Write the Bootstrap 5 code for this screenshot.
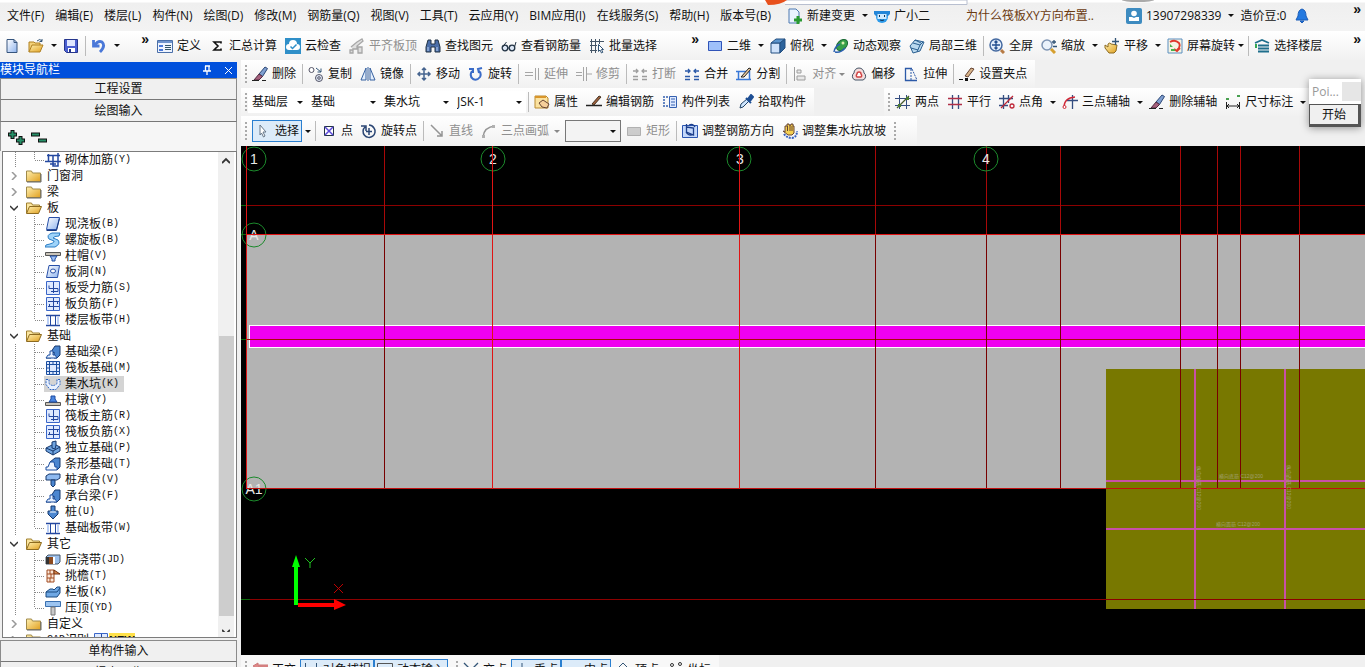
<!DOCTYPE html>
<html lang="zh-CN">
<head>
<meta charset="utf-8">
<meta name="viewport" content="width=device-width, initial-scale=1">
<title>钢筋算量</title>
<link href="https://cdn.jsdelivr.net/npm/bootstrap@5.3.0/dist/css/bootstrap.min.css" rel="stylesheet">
<style>
  body { font: 12px/16px "Open Sans", "Noto Sans CJK SC", sans-serif; color: #111; background: #f0f0f0; overflow: hidden; }
  button, select { font: inherit; color: inherit; }
  button { border: 0; background: none; padding: 0; }
  a { color: inherit; text-decoration: none; }
  svg { flex: none; }
  .ico { width: 16px; height: 16px; display: block; }
  .app { height: calc(100vh + 17px); }
  .fill { min-width: 0; min-height: 0; }
  .menubar { height: 31px; background: linear-gradient(#fff 0 2px, #efefef 3px, #f3f3f3); }
  .menus { flex: 0 0 783px; padding-left: 7px; gap: 11px; }
  .account { margin-left: 28px; }
  .bar { height: 28px; }
  .bar.main-bar { height: 29px; }
  .bar.draw-bar { height: 30px; }
  .strip { height: 100%; display: flex; align-items: center; background: linear-gradient(#fff, #f1f1f1); flex: none; white-space: nowrap; padding-right: 4px; }
  .files { flex: 0 0 153px; }
  .model { flex: 0 0 550px; }
  .axes { margin-left: 70px; }
  .tb { display: flex; align-items: center; gap: 4px; padding: 0 4px; height: 22px; white-space: nowrap; flex: none; }
  .tb:disabled { color: #8f8f8f; }
  .tb:disabled .ico { filter: grayscale(1); opacity: .55; }
  .tb.active { background: #dcebf9; border: 1px solid #2a7fd0; padding: 0 2px; }
  .arrow { width: 11px; height: 22px; display: flex; align-items: center; justify-content: center; flex: none; }
  .arrow::before { content: ""; border: 3px solid transparent; border-top-color: #111; border-bottom: 0; }
  .arrow.narrow { width: 8px; }
  .arrow:disabled::before { border-top-color: #888; }
  .split { width: 4px; height: 20px; flex: none; background: linear-gradient(#bbb, #bbb) 2px 0/1px 100% no-repeat; }
  .grip { width: 7px; height: 18px; flex: none; background: repeating-linear-gradient(#aaa 0 2px, transparent 2px 4px) 4px 0/2px 100% no-repeat; }
  .more { font: bold 14px/14px "Liberation Sans", sans-serif; margin-bottom: 14px; }
  .pick { appearance: none; border: 0; border-radius: 0; height: 22px; width: 73px; padding: 0 14px 0 4px; flex: none;
    background: #fff url("data:image/svg+xml,%3Csvg xmlns='http://www.w3.org/2000/svg' width='6' height='3'%3E%3Cpath d='M0 0h6L3 3z' fill='%23111'/%3E%3C/svg%3E") right 4px center no-repeat; }
  .pick.floor { width: 59px; }
  .pick.plain { width: 56px; border: 1px solid #777; background-color: #f3f3f3; margin: 0 1px 0 4px; }
  .news { color: #6b3a10; margin-left: 32px; }

  .side { width: 241px; padding: 2px 4px 0 0; flex: none; background: #f0f0f0; }
  .side-title { height: 16px; background: #0050dc; color: #fff; padding-right: 4px; }
  .side-btn { height: 22px; border: 1px solid #8b8b8b; border-bottom-color: #777; background: #f0f0f0; width: 100%; flex: none; }
  .side-btn + .side-btn { border-top: 0; }
  .tree-box + .side-btn { margin-top: 2px; }
  .side-tools { height: 29px; padding-left: 7px; gap: 6px; border-left: 1px solid #999; border-right: 1px solid #999; background: #f6f6f6; }
  .tree-box { margin-left: 2px; border: 1px solid #7c7c7c; background: #fff; }
  .tree, .tree ul { list-style: none; margin: 0; padding: 0; }
  .tree .key { font: 10px/16px "Liberation Mono", monospace; }
  .node { display: flex; align-items: center; height: 16px; white-space: nowrap; }
  .node .twist { width: 8px; height: 8px; margin: 0 8px 0 7px; }
  .node .ico { margin-right: 5px; }
  .branch { background: repeating-linear-gradient(#888 0 1px, transparent 1px 2px) 12px 0/1px 100% no-repeat,
    repeating-linear-gradient(#888 0 1px, transparent 1px 2px) 31px 0/1px calc(100% - 8px) no-repeat; }
  .branch .node::before { content: ""; width: 10px; height: 1px; margin-left: 32px; background: repeating-linear-gradient(90deg, #888 0 1px, transparent 1px 2px); }
  .branch .ico { margin-right: 4px; }
  .node.chosen { background: linear-gradient(#d4d4d4, #d4d4d4) 41px 0/80px 100% no-repeat; }
  .new-tag { background: #ffe14a; font: bold 11px/14px "Liberation Sans", sans-serif; }
  .scroll { width: 16px; background: #f0f0f0; margin-right: 2px; padding: 5px 0; }
  .scroll .room { flex: 168 0 0; }
  .scroll .thumb { flex: 276 0 0; background: #cdcdcd; width: 15px; }

  .view { background: #000; }
  .view text { font-family: "Liberation Sans", sans-serif; }
  .status { height: 29px; background: #f0f0f0; }
  .status .strip { background: #f8f8f8; }

  .float-win { position: absolute; right: 4px; top: 79px; width: 52px; background: #fff; box-shadow: 0 1px 8px #0006; }
  .float-title { height: 25px; color: #999; padding-left: 3px; }
  .float-title span + span { width: 19px; height: 19px; background: #e6e6e6; }
  .float-win button { height: 23px; width: 100%; background: #f0f0f0; border: 1px solid #555; border-width: 1px 3px 3px 1px; }
  .top-tab { position: absolute; left: 765px; top: 0; }
</style>
</head>
<body>
<svg width="0" height="0" class="position-absolute" aria-hidden="true">
  <defs>
    <linearGradient id="gold" x2="1" y2="1"><stop offset="0" stop-color="#fff0b0"/><stop offset="1" stop-color="#e0a020"/></linearGradient>
    <linearGradient id="sky" x2="1" y2="1"><stop offset="0" stop-color="#fff"/><stop offset="1" stop-color="#8fb4ee"/></linearGradient>
  </defs>
  <symbol id="i-new" viewBox="0 0 16 16"><path d="M3 1.500h7l3 3v10H3z" fill="url(#sky)" stroke="#36557e"/><path d="M10 1.500v3h3" fill="none" stroke="#36557e"/></symbol>
  <symbol id="i-open" viewBox="0 0 16 16"><path d="M1 14V4h5l1 1h5v2" fill="#f3d27a" stroke="#b08020"/><path d="M1 14l3-7h11l-3 7z" fill="url(#gold)" stroke="#b08020"/><path d="M9 3q3-3 5 0m0-2v2.500h-2.500" fill="none" stroke="#357"/></symbol>
  <symbol id="i-save" viewBox="0 0 16 16"><path d="M1.500 1.500h13v13h-11l-2-2z" fill="#4a5fd0" stroke="#25358c"/><path d="M4 2h8v6H4z" fill="#dfe6ff"/><path d="M5 10h7v4H5z" fill="#fff"/><path d="M6 11h2v3H6z" fill="#25358c"/></symbol>
  <symbol id="i-undo" viewBox="0 0 16 16"><path d="M2.500 2v6h6M3 8q4-6 8-4 4 4-2 10" fill="none" stroke="#4a78d8" stroke-width="2.800"/></symbol>
  <symbol id="i-define" viewBox="0 0 16 16"><path d="M.5 2.500h15v12H.5z" fill="#eef4ff" stroke="#4a6fa8"/><path d="M1 3h14v2H1z" fill="#6f93cc"/><path d="M2 7h4v2H2zM2 11h4v2H2z" fill="#4a78d8"/><path d="M8 7.500h6M8 9.500h6M8 11.500h6" stroke="#356"/></symbol>
  <symbol id="i-sum" viewBox="0 0 16 16"><path d="M12 5.500V4H5l4 4-4 4h7v-1.500" fill="none" stroke="#111" stroke-width="1.600"/></symbol>
  <symbol id="i-cloud" viewBox="0 0 16 16"><path d="M0 0h16v16H0z" fill="#2f8fc8"/><path d="M4 12a3 3 0 0 1 0-6 4 4 0 0 1 8 0 3 3 0 0 1 0 6z" fill="#fff"/><path d="M5.500 8.500l2 2 4-4" fill="none" stroke="#2f8fc8" stroke-width="1.500"/></symbol>
  <symbol id="i-flat" viewBox="0 0 16 16"><path d="M2 9l6-5 5-3 1 2-6 5v3H4v4H1v-3h3M9 15V9h4v6z" fill="#ccc" stroke="#666" stroke-width="1.300"/></symbol>
  <symbol id="i-find" viewBox="0 0 16 16"><path d="M3 2h3v4h4V2h3l2 7v5h-5V9H6v5H1V9z" fill="#4b6ea8" stroke="#234"/><path d="M3 9v4M12 9v4" stroke="#b9d0f4"/></symbol>
  <symbol id="i-glass" viewBox="0 0 16 16"><circle cx="4" cy="10" r="2.800" fill="#dce6f4" stroke="#234" stroke-width="1.300"/><circle cx="11" cy="10" r="2.800" fill="#dce6f4" stroke="#234" stroke-width="1.300"/><path d="M1.500 9l4-5M13.500 9l1.500-5M7 10h1" stroke="#234" fill="none"/></symbol>
  <symbol id="i-batch" viewBox="0 0 16 16"><path d="M2.500 1v14M6.500 1v14M10.500 1v5M1 3.500h14M1 7.500h7M1 12.500h7" stroke="#456" fill="none"/><path d="M9.500 6.500v7l1.500-1.500 1.500 3 1.300-.7-1.300-2.800h2z" fill="#fff" stroke="#357"/></symbol>
  <symbol id="i-plane" viewBox="0 0 16 16"><path d="M1.500 3.500h13v9h-13z" fill="#9fc0fa" stroke="#3054b8"/></symbol>
  <symbol id="i-cube" viewBox="0 0 16 16"><path d="M1 5h9v10H1z" fill="#cfe2fa" stroke="#234f80"/><path d="M1 5l5-4h9l-5 4z" fill="#5b94cc" stroke="#234f80"/><path d="M10 5l5-4v9l-5 5z" fill="#2c639c" stroke="#234f80"/></symbol>
  <symbol id="i-orbit" viewBox="0 0 16 16"><ellipse cx="9" cy="7" rx="6.500" ry="4.500" transform="rotate(-45 9 7)" fill="#38a048" stroke="#1c6a36"/><circle cx="10" cy="5" r="1.500" fill="#d9f0b0"/><path d="M1 14q1-6 6-8M2 14q6 1 10-4" fill="none" stroke="#2a60b0" stroke-width="1.500"/></symbol>
  <symbol id="i-local" viewBox="0 0 16 16"><path d="M1 8l5-6 9 2-4 9-7 2z" fill="#b9d8ee" stroke="#2b5f90"/><path d="M4 5l7 2-3 7M11 7l3-3M6 2l6 3M2 10l7 2" fill="none" stroke="#2b5f90"/></symbol>
  <symbol id="i-full" viewBox="0 0 16 16"><circle cx="7" cy="7" r="6" fill="#e3eefc" stroke="#4469a0" stroke-width="1.500"/><path d="M7 3v8M3 7h8M5.500 4.500L7 3l1.500 1.500M5.500 9.500L7 11l1.500-1.500" stroke="#234f90" stroke-width="1.300" fill="none"/><path d="M12 12l3 3" stroke="#b67a44" stroke-width="3"/></symbol>
  <symbol id="i-zoom" viewBox="0 0 16 16"><circle cx="6" cy="7" r="5" fill="#eaf2fb" stroke="#7d94b3" stroke-width="1.500"/><path d="M10 11l4 4" stroke="#d6a030" stroke-width="3"/><path d="M11 4h4M13 2v4M12 8.500h4" stroke="#357" stroke-width="1.300"/></symbol>
  <symbol id="i-pan" viewBox="0 0 16 16"><path d="M1 7l3 2V6q2-2 3 0l6 1-1 6-2 2H5L1 10z" fill="url(#gold)" stroke="#8c6a20"/><path d="M11.500 0v7M8 3.500h7" stroke="#357" stroke-width="1.300"/></symbol>
  <symbol id="i-rot-screen" viewBox="0 0 16 16"><path d="M1 1h14v14H1z" fill="#f5f3e4" stroke="#5a8fc0"/><path d="M3 4q5-3 9 1 2 4-2 7M13 10l-3 3-3-2" fill="none" stroke="#e0382c" stroke-width="1.800"/><path d="M3 6l3 3H3zM4 11h4v2H4z" fill="#4bb04b"/></symbol>
  <symbol id="i-floors" viewBox="0 0 16 16"><path d="M1 5l7-3 7 3M4 7.500h11M4 10.500h11M4 13.500h11" fill="none" stroke="#1f6f8c" stroke-width="1.800"/><path d="M1 6h2v4H1z" fill="#35a853"/></symbol>
  <symbol id="i-newdoc" viewBox="0 0 16 16"><path d="M2 1h7l3 3v11H2z" fill="#eaf3ff" stroke="#4c79b0"/><path d="M11 8v8M7 12h8" stroke="#2a9a32" stroke-width="3"/></symbol>
  <symbol id="i-robot" viewBox="0 0 16 16"><circle cx="8" cy="9" r="6" fill="#2d9bea"/><path d="M0 6V3h16v3l-2 2H2z" fill="#2386d8"/><path d="M3.500 6h9v5h-9z" fill="#cfeaff"/><path d="M5.500 7v2M10.500 7v2M6 12q2 1 4 0" stroke="#135" fill="none"/></symbol>
  <symbol id="i-user" viewBox="0 0 16 16"><rect width="16" height="16" rx="2" fill="#3d8bc0"/><circle cx="8" cy="5.500" r="2.800" fill="#fff"/><path d="M3 13V9h3l2 1 2-1h3v4z" fill="#fff"/></symbol>
  <symbol id="i-bell" viewBox="0 0 16 16"><path d="M8 1q4 1 4 7l2 4H2l2-4q0-6 4-7zM6 13h4l-2 2z" fill="#2379e0" stroke="#1a5cb8"/></symbol>
  <symbol id="i-erase" viewBox="0 0 16 16"><path d="M7 8l6-7 2.500 1.500-5 8z" fill="#7f9fd0" stroke="#2b4674"/><path d="M7 8l3.500 2.500L7 14H2z" fill="#a5607c" stroke="#502a40"/><path d="M0 14.500h7M10 14.500h4" stroke="#222"/></symbol>
  <symbol id="i-copy" viewBox="0 0 16 16"><circle cx="3.500" cy="4" r="2.500" fill="#fff" stroke="#556"/><circle cx="11" cy="12" r="3.500" fill="#dfe8f6" stroke="#556"/><circle cx="11" cy="12" r="1.300" fill="none" stroke="#556"/><path d="M8 2l5 4M13 2.500V6H9.500" fill="none" stroke="#357"/></symbol>
  <symbol id="i-mirror" viewBox="0 0 16 16"><path d="M6 2v12H1zM10 2v12h5z" fill="#e3eefc" stroke="#3560a0"/><path d="M8 1v14" stroke="#3560a0"/></symbol>
  <symbol id="i-move" viewBox="0 0 16 16"><path d="M8 2v12M2 8h12M6 4l2-2 2 2M6 12l2 2 2-2M4 6L2 8l2 2M12 6l2 2-2 2" fill="none" stroke="#46648f" stroke-width="1.500"/></symbol>
  <symbol id="i-turn" viewBox="0 0 16 16"><path d="M4 5q-3 5 1 8 4 2 7-2 2-4-2-7M14 2l-4 1 1 4M1 3h4v4" fill="none" stroke="#3b6cc8" stroke-width="2"/></symbol>
  <symbol id="i-extend" viewBox="0 0 16 16"><path d="M1 6.500h8M1 9.500h8M11.500 2v12M14.500 2v12" fill="none" stroke="#567"/></symbol>
  <symbol id="i-trim" viewBox="0 0 16 16"><path d="M0 6.500h6M0 9.500h6M10 8h6M7.500 1v14M10.500 1v14" fill="none" stroke="#567"/></symbol>
  <symbol id="i-break" viewBox="0 0 16 16"><path d="M1 10.500h5M1 13.500h5M10 10.500h5M10 13.500h5M1 5h5M4 3l2 2-2 2M15 5h-5M12 3l-2 2 2 2" fill="none" stroke="#2c5aa8" stroke-width="1.300"/></symbol>
  <symbol id="i-cut" viewBox="0 0 16 16"><path d="M0 5.500h14M0 13.500h15M2.500 5v9M13.500 5v9" fill="none" stroke="#3978d8" stroke-width="1.500"/><path d="M5 11l8-9 2 1-7 8z" fill="#e8c9a0" stroke="#222"/></symbol>
  <symbol id="i-align" viewBox="0 0 16 16"><path d="M2.500 1v14M5 4h4v3H5zM5 10h8v4H5z" fill="#ddd" stroke="#555"/></symbol>
  <symbol id="i-offset" viewBox="0 0 16 16"><path d="M4 14a4 4 0 0 1-1-7 5 5 0 0 1 10 0 4 4 0 0 1-1 7z" fill="#f4dede" stroke="#456"/><path d="M6 11a2 2 0 0 1 0-3 2 2 0 0 1 4 0 2 2 0 0 1 0 3z" fill="#fff" stroke="#d04444" stroke-width="1.500"/></symbol>
  <symbol id="i-stretch" viewBox="0 0 16 16"><path d="M9 2.500H2.500v12H14" fill="none" stroke="#2c5aa8" stroke-width="1.300"/><path d="M8 3v11M9 3l5 11" fill="none" stroke="#2c5aa8" stroke-dasharray="2 1"/></symbol>
  <symbol id="i-grippt" viewBox="0 0 16 16"><path d="M6 10l6-8 3 1-6 8z" fill="#d8b48a" stroke="#643"/><path d="M0 13.500h4M11 13.500h5" stroke="#111"/><path d="M6 12h3v3H6z" fill="#111"/></symbol>
  <symbol id="i-prop" viewBox="0 0 16 16"><path d="M1 2h11l2 2v10H1z" fill="#fbe2a0" stroke="#b98a30"/><path d="M1 2h11v2H1z" fill="#d9952a"/><path d="M5 9l4-3 6 4-2 4-5-1z" fill="#f6cf9a" stroke="#643"/></symbol>
  <symbol id="i-edit" viewBox="0 0 16 16"><path d="M0 11.500h16" stroke="#222" stroke-width="1.500"/><path d="M6 10l7-8 2 1-7 8z" fill="#a0603c" stroke="#432"/></symbol>
  <symbol id="i-list" viewBox="0 0 16 16"><path d="M1 3h2M1 6h2M1 9h2M1 12h2M4 3h2M4 12h2" stroke="#3560b0" stroke-width="1.500"/><path d="M7.500 2.500h7v11h-7z" fill="#dfeaff" stroke="#3560b0"/><path d="M9 5h4M9 8h4M9 11h4" stroke="#3560b0"/></symbol>
  <symbol id="i-dropper" viewBox="0 0 16 16"><path d="M2 14l1-4 6-5 2 2-6 6z" fill="#cfe6ff" stroke="#246"/><path d="M8 4l5 5M10 5l3-4 2 2-3 4z" fill="#1e4f94" stroke="#1e4f94" stroke-width="2"/></symbol>
  <symbol id="i-axis" viewBox="0 0 16 16"><path d="M4.500 1v14M11.500 1v14M0 4.500h16M0 11.500h15" stroke="#344d80"/><path d="M2 14L14 2" stroke="#4a5a30" stroke-width="1.300"/><path d="M11 3h3v3h-3zM3 10h3v3H3z" fill="#4a7a30"/></symbol>
  <symbol id="i-parallel" viewBox="0 0 16 16"><path d="M5.500 1v14M11.500 1v14" stroke="#344d80" stroke-width="1.300"/><path d="M1 4.500h14M1 10.500h14" stroke="#b03048" stroke-width="1.300"/></symbol>
  <symbol id="i-angle" viewBox="0 0 16 16"><path d="M4.500 1v14M0 4.500h14M9.500 1v8M0 11.500h9" stroke="#344d80" stroke-width="1.300"/><path d="M2 14L14 2" stroke="#c02838" stroke-width="1.300"/><circle cx="13" cy="12" r="2" fill="none" stroke="#c02838" stroke-width="1.300"/></symbol>
  <symbol id="i-arc3" viewBox="0 0 16 16"><path d="M10.500 1v14M5 6.500h11" stroke="#344d80" stroke-width="1.300"/><path d="M2 13q0-9 11-10" fill="none" stroke="#d02838" stroke-width="1.300"/><circle cx="2.500" cy="13" r="1.500" fill="#fff" stroke="#d02838"/></symbol>
  <symbol id="i-dim" viewBox="0 0 16 16"><path d="M1.500 8v7M14.500 8v7M2 12h12M4 10l-2 2 2 2M12 10l2 2-2 2" fill="none" stroke="#222"/><path d="M1 4h3v2H1zM12 1h3v2h-3z" fill="#49a050"/></symbol>
  <symbol id="i-cursor" viewBox="0 0 16 16"><path d="M5 2l6 7H8l2 4-1.500 1L6.500 10 5 12z" fill="#fff" stroke="#678"/></symbol>
  <symbol id="i-point" viewBox="0 0 16 16"><path d="M3.500 3.500h9v9h-9z" fill="#fff" stroke="#234"/><path d="M4 4l8 8M12 4l-8 8" stroke="#5a48d8" stroke-width="1.500"/></symbol>
  <symbol id="i-rotpt" viewBox="0 0 16 16"><path d="M4 4a6 6 0 1 0 9 1M0 3h5v5M13 5q-2-3-5-3M8 5v7M5 8.500h6" fill="none" stroke="#2b4674" stroke-width="1.500"/></symbol>
  <symbol id="i-line" viewBox="0 0 16 16"><path d="M2 2l11 11M13 8v5H8" fill="none" stroke="#444" stroke-width="1.500"/></symbol>
  <symbol id="i-arc" viewBox="0 0 16 16"><path d="M2 14Q3 4 14 3" fill="none" stroke="#444" stroke-width="1.500"/><path d="M1 12h3v3H1zM11 2h3v3h-3z" fill="#777"/></symbol>
  <symbol id="i-rect" viewBox="0 0 16 16"><path d="M1.500 4.500h13v8h-13z" fill="#aaa" stroke="#777"/></symbol>
  <symbol id="i-dir" viewBox="0 0 16 16"><path d="M.5 2.500h15v12H.5z" fill="#c4d8fa" stroke="#2b55b0"/><path d="M4.500 1v8l7 3V5l-7-1M4 9q3 5 8 2M7 2q4-2 6 2" fill="none" stroke="#1d3f8c" stroke-width="1.300"/></symbol>
  <symbol id="i-slope" viewBox="0 0 16 16"><path d="M3 9V3h2V1h2v1h2V1h2v2h1v7l-2 2H6L1 8z" fill="#f4cf50" stroke="#643"/><path d="M5.500 3v5M8 2v6M10 3v5" stroke="#643"/><path d="M2 11q3 4 8 4 5-1 5-7" fill="none" stroke="#3560c0" stroke-width="2" stroke-dasharray="2 1"/></symbol>
  <symbol id="i-folder" viewBox="0 0 16 16"><path d="M.5 13.500V3h5l1 2h8v8.500z" fill="url(#gold)" stroke="#a08a4a"/><path d="M1 14h14V6" fill="none" stroke="#666"/></symbol>
  <symbol id="i-fopen" viewBox="0 0 16 16"><path d="M.5 13V3h5l1 2h7v2" fill="#fbe6a0" stroke="#a08030"/><path d="M.5 13.500l3-7h12l-3 7z" fill="url(#gold)" stroke="#8c6a20"/></symbol>
  <symbol id="i-slab" viewBox="0 0 16 16"><path d="M4 1.500h10.500l-3 12H1.500z" fill="url(#sky)" stroke="#2850a8"/><path d="M1.500 14.500h10l3-12" fill="none" stroke="#17387c"/></symbol>
  <symbol id="i-spiral" viewBox="0 0 16 16"><path d="M15 1H7Q1 3 4 7l5 2q1 2-8 4l-1 2h10q6-3 3-7L8 6q1-2 6-2z" fill="#9fd4fa" stroke="#2a7cc4"/></symbol>
  <symbol id="i-cap" viewBox="0 0 16 16"><path d="M.5 4.500h15v3H.5z" fill="#c9c3b8" stroke="#555"/><path d="M5 8h7l-2 3v2H7v-2z" fill="#9fc0f4" stroke="#1d4aa0"/></symbol>
  <symbol id="i-hole" viewBox="0 0 16 16"><path d="M4 1.500h10.500l-2 12h-11z" fill="url(#sky)" stroke="#2850a8"/><ellipse cx="8" cy="7" rx="2.500" ry="2" fill="#fff" stroke="#2850a8"/></symbol>
  <symbol id="i-bar" viewBox="0 0 16 16"><path d="M1.500 1.500h13v13h-13z" fill="#dfeaff" stroke="#3a66c8"/><path d="M8.500 2v11M4 5.500v3h9v3H6" fill="none" stroke="#2448a0"/></symbol>
  <symbol id="i-neg" viewBox="0 0 16 16"><path d="M1.500 1.500h13v13h-13z" fill="#dfeaff" stroke="#3a66c8"/><path d="M8.500 2v12M3 5.500h11M3 10.500h11M4.500 8v3M12.500 5v3" fill="none" stroke="#2448a0"/></symbol>
  <symbol id="i-band" viewBox="0 0 16 16"><path d="M1 3.500h14M1 13.500h14" stroke="#2448a0" stroke-width="1.500"/><path d="M5.500 4v9M10.500 4v9" stroke="#2448a0"/><path d="M2 5h2v7H2zM12 5h2v7h-2z" fill="#bcd0f6"/></symbol>
  <symbol id="i-beam" viewBox="0 0 16 16"><path d="M1 14h5V8l4-6h5v9l-3 3H9V8L6 11" fill="#4b86d0" stroke="#17386c"/><path d="M1 14l2-3h2V7h3v4h2l2 3z" fill="#e7f1ff" stroke="#1c4fa0"/></symbol>
  <symbol id="i-raft" viewBox="0 0 16 16"><path d="M1.500 1.500h13v13h-13z" fill="#dfeaff" stroke="#1c4fa0"/><path d="M4.500 1v14M11.500 1v14M1 4.500h14M1 11.500h14M8 1v3M8 12v3M1 8h3M12 8h3" fill="none" stroke="#1c4fa0"/></symbol>
  <symbol id="i-pit" viewBox="0 0 16 16"><path d="M1 3.500h3v4q4 4 8 0v-4h3v5l-4 5H5l-4-5z" fill="#eaf2ff" stroke="#2a62c0" stroke-dasharray="2 1"/></symbol>
  <symbol id="i-pier" viewBox="0 0 16 16"><path d="M.5 10.500h15v3H.5z" fill="#c9c3b8" stroke="#555"/><path d="M4 10l2-3V4h4v3l2 3z" fill="#4a86e0" stroke="#1d4aa0"/></symbol>
  <symbol id="i-iso" viewBox="0 0 16 16"><path d="M1 8l6-3V2l4-1v4l4 2v4l-7 4-7-4z" fill="#6fa4e0" stroke="#17386c"/><path d="M1 8l7 3 7-4M8 11v4M7 5v3l3 1 1-4" fill="none" stroke="#17386c"/></symbol>
  <symbol id="i-strip" viewBox="0 0 16 16"><path d="M5 6l5-4h5v9l-3 3z" fill="#4b86d0" stroke="#17386c"/><path d="M1 14v-3h2l2-5h4l1 5h2v3z" fill="#eef5ff" stroke="#1c4fa0"/></symbol>
  <symbol id="i-pcap" viewBox="0 0 16 16"><path d="M1 4l3-2h11v4l-3 2H1z" fill="#8fbaf0" stroke="#17386c"/><path d="M6 8h4v5l-2 2-2-2z" fill="#4b86d0" stroke="#17386c"/></symbol>
  <symbol id="i-pile" viewBox="0 0 16 16"><path d="M6 2h4v5h3v3l-5 5-5-5V7h3z" fill="#4b86d0" stroke="#17386c"/><path d="M5 8h6" stroke="#fff"/></symbol>
  <symbol id="i-post" viewBox="0 0 16 16"><path d="M1 5l2-2h12v7l-2 2H1z" fill="#9dc0ec" stroke="#456"/><path d="M4 5h4v7H4z" fill="#8c4a20"/><path d="M1 5h3v7H1z" fill="#333"/><path d="M8 5h2v7H8z" fill="#fff"/></symbol>
  <symbol id="i-eave" viewBox="0 0 16 16"><path d="M2 2h7v12H2zM2 6h7M2 10h7M5 2v4M6 6v4M5 10v4" fill="#fbe8da" stroke="#a04a20"/><path d="M9 2l6 4H9z" fill="#d98a50" stroke="#703010"/></symbol>
  <symbol id="i-rail" viewBox="0 0 16 16"><path d="M1 8l4-3h3l1 1 3-3h3v6l-3 4H1z" fill="#6fa8e4" stroke="#1a4a80"/><path d="M1 8h11l3-4" fill="none" stroke="#1a4a80"/></symbol>
  <symbol id="i-top" viewBox="0 0 16 16"><path d="M.5 1.500h15v5H.5z" fill="#9cc4f0" stroke="#3a70b0"/><path d="M6 7h4v8H6z" fill="#c9c9c9" stroke="#777"/></symbol>
  <symbol id="i-wall" viewBox="0 0 16 16"><path d="M2 3.500h13M0 9.500h16M3.500 2v8M8 3v11h5V1M5 12h6" fill="none" stroke="#2448a0" stroke-width="1.500"/></symbol>
  <symbol id="i-ortho" viewBox="0 0 16 16"><path d="M16 3H6V1L1 4l5 3V5h10M6 5v10" fill="#d88" stroke="#c77"/></symbol>
  <symbol id="i-cross" viewBox="0 0 16 16"><path d="M1 1l14 14M15 1L1 15" stroke="#357" stroke-width="1.300"/></symbol>
  <symbol id="i-snap" viewBox="0 0 16 16"><path d="M2.500 1v13h11V1" fill="none" stroke="#357"/></symbol>
  <symbol id="i-dyn" viewBox="0 0 16 16"><path d="M.5 1.500h15v12H.5zM1 5.500h14" fill="none" stroke="#555"/></symbol>
  <symbol id="i-perp" viewBox="0 0 16 16"><path d="M8 1v13M1 14.500h14" stroke="#357"/></symbol>
  <symbol id="i-mid" viewBox="0 0 16 16"><path d="M0 10.500h16" stroke="#357"/><path d="M6 8h5v5H6z" fill="#357"/></symbol>
  <symbol id="i-vert" viewBox="0 0 16 16"><path d="M8 1l6 6-6 6-6-6z" fill="none" stroke="#357"/></symbol>
  <symbol id="i-coord" viewBox="0 0 16 16"><circle cx="5" cy="3" r="1.500" fill="none" stroke="#333"/><circle cx="13" cy="2" r="1.500" fill="none" stroke="#333"/><path d="M1 7h3M10 7h4M2 12h12" stroke="#333"/></symbol>
  <symbol id="i-down" viewBox="0 0 8 8"><path d="M0 2l4 4 4-4" fill="none" stroke="#333" stroke-width="1.500"/></symbol>
  <symbol id="i-right" viewBox="0 0 8 8"><path d="M2 0l4 4-4 4" fill="none" stroke="#999" stroke-width="1.500"/></symbol>
</svg>

<div class="app d-flex flex-column position-relative">
  <header class="flex-shrink-0">
    <div class="menubar d-flex align-items-center text-nowrap overflow-hidden">
      <nav class="menus d-flex" aria-label="菜单">
        <a href="#">文件(F)</a><a href="#">编辑(E)</a><a href="#">楼层(L)</a><a href="#">构件(N)</a><a href="#">绘图(D)</a><a href="#">修改(M)</a><a href="#">钢筋量(Q)</a><a href="#">视图(V)</a><a href="#">工具(T)</a><a href="#">云应用(Y)</a><a href="#">BIM应用(I)</a><a href="#">在线服务(S)</a><a href="#">帮助(H)</a><a href="#">版本号(B)</a>
      </nav>
      <button class="tb"><svg class="ico"><use href="#i-newdoc"/></svg>新建变更</button><button class="arrow" aria-label="新建变更选项"></button>
      <button class="tb"><svg class="ico"><use href="#i-robot"/></svg>广小二</button>
      <a href="#" class="news">为什么筏板XY方向布置..</a>
      <button class="tb account"><svg class="ico"><use href="#i-user"/></svg>13907298339</button><button class="arrow" aria-label="账号选项"></button>
      <button class="tb">造价豆:0</button>
      <button class="tb" aria-label="消息"><svg class="ico"><use href="#i-bell"/></svg></button>
      <button class="more ms-auto me-1" aria-label="更多">»</button>
    </div>
    <div class="bar main-bar d-flex overflow-hidden">
      <div class="strip files">
        <button class="tb" aria-label="新建"><svg class="ico"><use href="#i-new"/></svg></button>
        <button class="tb" aria-label="打开"><svg class="ico"><use href="#i-open"/></svg></button><button class="arrow" aria-label="打开选项"></button>
        <button class="tb" aria-label="保存"><svg class="ico"><use href="#i-save"/></svg></button><span class="split"></span>
        <button class="tb" aria-label="撤销"><svg class="ico"><use href="#i-undo"/></svg></button><button class="arrow" aria-label="撤销选项"></button>
        <button class="more ms-auto" aria-label="更多">»</button>
      </div>
      <div class="strip model">
        <button class="tb"><svg class="ico"><use href="#i-define"/></svg>定义</button>
        <button class="tb"><svg class="ico"><use href="#i-sum"/></svg>汇总计算</button>
        <button class="tb"><svg class="ico"><use href="#i-cloud"/></svg>云检查</button>
        <button class="tb" disabled><svg class="ico"><use href="#i-flat"/></svg>平齐板顶</button>
        <button class="tb"><svg class="ico"><use href="#i-find"/></svg>查找图元</button>
        <button class="tb"><svg class="ico"><use href="#i-glass"/></svg>查看钢筋量</button>
        <button class="tb"><svg class="ico"><use href="#i-batch"/></svg>批量选择</button>
        <button class="more ms-auto" aria-label="更多">»</button>
      </div>
      <div class="strip flex-grow-1">
        <button class="tb"><svg class="ico"><use href="#i-plane"/></svg>二维</button><button class="arrow" aria-label="二维选项"></button>
        <button class="tb"><svg class="ico"><use href="#i-cube"/></svg>俯视</button><button class="arrow" aria-label="俯视选项"></button>
        <button class="tb"><svg class="ico"><use href="#i-orbit"/></svg>动态观察</button>
        <button class="tb"><svg class="ico"><use href="#i-local"/></svg>局部三维</button><span class="split"></span>
        <button class="tb"><svg class="ico"><use href="#i-full"/></svg>全屏</button>
        <button class="tb"><svg class="ico"><use href="#i-zoom"/></svg>缩放</button><button class="arrow" aria-label="缩放选项"></button>
        <button class="tb"><svg class="ico"><use href="#i-pan"/></svg>平移</button><button class="arrow" aria-label="平移选项"></button>
        <button class="tb pe-0"><svg class="ico"><use href="#i-rot-screen"/></svg>屏幕旋转</button><button class="arrow" aria-label="旋转选项"></button><span class="split"></span>
        <button class="tb"><svg class="ico"><use href="#i-floors"/></svg>选择楼层</button>
        <button class="more ms-auto" aria-label="更多">»</button>
      </div>
    </div>
  </header>

  <div class="d-flex flex-grow-1 fill">
    <aside class="side d-flex flex-column">
      <div class="side-title d-flex align-items-center flex-shrink-0">
        <span class="me-auto">模块导航栏</span>
        <button aria-label="固定" class="me-2"><svg width="10" height="10" class="d-block"><path d="M3 1h5M3.500 1v5M7 1v5M1 6h8M5 6v4" stroke="#fff" stroke-width="1.300" fill="none"/></svg></button>
        <button aria-label="关闭" class="ms-1"><svg width="9" height="9" class="d-block"><path d="M1 1l7 7M8 1L1 8" stroke="#fff" fill="none"/></svg></button>
      </div>
      <button class="side-btn">工程设置</button>
      <button class="side-btn">绘图输入</button>
      <div class="side-tools d-flex align-items-center flex-shrink-0">
        <button aria-label="全部展开"><svg width="17" height="16" class="d-block"><path d="M0 5.500h9M4.500 1v9M8 11.500h9M12.500 7v9" stroke="#111" stroke-width="4"/><path d="M1 5.500h7M4.500 2v7M9 11.500h7M12.500 8v7" stroke="#279068" stroke-width="2"/></svg></button>
        <button aria-label="全部折叠"><svg width="17" height="16" class="d-block"><path d="M0 5.500h9M7 11.500h9" stroke="#111" stroke-width="4"/><path d="M1 5.500h7M8 11.500h7" stroke="#279068" stroke-width="2"/></svg></button>
      </div>
      <div class="tree-box d-flex flex-grow-1 overflow-hidden fill">
        <ul class="tree flex-grow-1">
          <li>
            <ul class="branch">
              <li><a href="#" class="node"><svg class="ico"><use href="#i-wall"/></svg>砌体加筋<span class="key">(Y)</span></a></li>
            </ul>
          </li>
          <li><a href="#" class="node"><svg class="twist"><use href="#i-right"/></svg><svg class="ico"><use href="#i-folder"/></svg>门窗洞</a></li>
          <li><a href="#" class="node"><svg class="twist"><use href="#i-right"/></svg><svg class="ico"><use href="#i-folder"/></svg>梁</a></li>
          <li><a href="#" class="node"><svg class="twist"><use href="#i-down"/></svg><svg class="ico"><use href="#i-fopen"/></svg>板</a>
            <ul class="branch">
              <li><a href="#" class="node"><svg class="ico"><use href="#i-slab"/></svg>现浇板<span class="key">(B)</span></a></li>
              <li><a href="#" class="node"><svg class="ico"><use href="#i-spiral"/></svg>螺旋板<span class="key">(B)</span></a></li>
              <li><a href="#" class="node"><svg class="ico"><use href="#i-cap"/></svg>柱帽<span class="key">(V)</span></a></li>
              <li><a href="#" class="node"><svg class="ico"><use href="#i-hole"/></svg>板洞<span class="key">(N)</span></a></li>
              <li><a href="#" class="node"><svg class="ico"><use href="#i-bar"/></svg>板受力筋<span class="key">(S)</span></a></li>
              <li><a href="#" class="node"><svg class="ico"><use href="#i-neg"/></svg>板负筋<span class="key">(F)</span></a></li>
              <li><a href="#" class="node"><svg class="ico"><use href="#i-band"/></svg>楼层板带<span class="key">(H)</span></a></li>
            </ul>
          </li>
          <li><a href="#" class="node"><svg class="twist"><use href="#i-down"/></svg><svg class="ico"><use href="#i-fopen"/></svg>基础</a>
            <ul class="branch">
              <li><a href="#" class="node"><svg class="ico"><use href="#i-beam"/></svg>基础梁<span class="key">(F)</span></a></li>
              <li><a href="#" class="node"><svg class="ico"><use href="#i-raft"/></svg>筏板基础<span class="key">(M)</span></a></li>
              <li><a href="#" class="node chosen"><svg class="ico"><use href="#i-pit"/></svg>集水坑<span class="key">(K)</span></a></li>
              <li><a href="#" class="node"><svg class="ico"><use href="#i-pier"/></svg>柱墩<span class="key">(Y)</span></a></li>
              <li><a href="#" class="node"><svg class="ico"><use href="#i-bar"/></svg>筏板主筋<span class="key">(R)</span></a></li>
              <li><a href="#" class="node"><svg class="ico"><use href="#i-neg"/></svg>筏板负筋<span class="key">(X)</span></a></li>
              <li><a href="#" class="node"><svg class="ico"><use href="#i-iso"/></svg>独立基础<span class="key">(P)</span></a></li>
              <li><a href="#" class="node"><svg class="ico"><use href="#i-strip"/></svg>条形基础<span class="key">(T)</span></a></li>
              <li><a href="#" class="node"><svg class="ico"><use href="#i-pcap"/></svg>桩承台<span class="key">(V)</span></a></li>
              <li><a href="#" class="node"><svg class="ico"><use href="#i-beam"/></svg>承台梁<span class="key">(F)</span></a></li>
              <li><a href="#" class="node"><svg class="ico"><use href="#i-pile"/></svg>桩<span class="key">(U)</span></a></li>
              <li><a href="#" class="node"><svg class="ico"><use href="#i-band"/></svg>基础板带<span class="key">(W)</span></a></li>
            </ul>
          </li>
          <li><a href="#" class="node"><svg class="twist"><use href="#i-down"/></svg><svg class="ico"><use href="#i-fopen"/></svg>其它</a>
            <ul class="branch">
              <li><a href="#" class="node"><svg class="ico"><use href="#i-post"/></svg>后浇带<span class="key">(JD)</span></a></li>
              <li><a href="#" class="node"><svg class="ico"><use href="#i-eave"/></svg>挑檐<span class="key">(T)</span></a></li>
              <li><a href="#" class="node"><svg class="ico"><use href="#i-rail"/></svg>栏板<span class="key">(K)</span></a></li>
              <li><a href="#" class="node"><svg class="ico"><use href="#i-top"/></svg>压顶<span class="key">(YD)</span></a></li>
            </ul>
          </li>
          <li><a href="#" class="node"><svg class="twist"><use href="#i-right"/></svg><svg class="ico"><use href="#i-folder"/></svg>自定义</a></li>
          <li><a href="#" class="node"><svg class="twist"><use href="#i-right"/></svg><svg class="ico"><use href="#i-folder"/></svg><span class="key">CAD</span>识别<svg class="ico ms-1 me-0"><use href="#i-neg"/></svg><span class="new-tag">NEW</span></a></li>
        </ul>
        <div class="scroll d-flex flex-column align-items-center">
          <svg width="8" height="8"><path d="M0 6l4-4 4 4" fill="none" stroke="#333" stroke-width="1.800"/></svg>
          <div class="room"></div><div class="thumb"></div>
          <svg width="8" height="8" class="mt-2 pt-1"><path d="M0 2l4 4 4-4" fill="none" stroke="#333" stroke-width="1.800"/></svg>
        </div>
      </div>
      <button class="side-btn">单构件输入</button>
      <button class="side-btn">报表预览</button>
    </aside>

    <main class="d-flex flex-column flex-grow-1 fill">
      <div class="bar d-flex">
        <div class="strip">
          <span class="grip"></span>
          <button class="tb"><svg class="ico"><use href="#i-erase"/></svg>删除</button><span class="split"></span>
          <button class="tb"><svg class="ico"><use href="#i-copy"/></svg>复制</button>
          <button class="tb"><svg class="ico"><use href="#i-mirror"/></svg>镜像</button><span class="split"></span>
          <button class="tb"><svg class="ico"><use href="#i-move"/></svg>移动</button>
          <button class="tb"><svg class="ico"><use href="#i-turn"/></svg>旋转</button><span class="split"></span>
          <button class="tb" disabled><svg class="ico"><use href="#i-extend"/></svg>延伸</button>
          <button class="tb" disabled><svg class="ico"><use href="#i-trim"/></svg>修剪</button><span class="split"></span>
          <button class="tb" disabled><svg class="ico"><use href="#i-break"/></svg>打断</button>
          <button class="tb"><svg class="ico"><use href="#i-break"/></svg>合并</button>
          <button class="tb"><svg class="ico"><use href="#i-cut"/></svg>分割</button><span class="split"></span>
          <button class="tb pe-0" disabled><svg class="ico"><use href="#i-align"/></svg>对齐</button><button class="arrow" disabled aria-label="对齐选项"></button>
          <button class="tb"><svg class="ico"><use href="#i-offset"/></svg>偏移</button>
          <button class="tb"><svg class="ico"><use href="#i-stretch"/></svg>拉伸</button><span class="split"></span>
          <button class="tb"><svg class="ico"><use href="#i-grippt"/></svg>设置夹点</button>
        </div>
      </div>
      <div class="bar d-flex">
        <div class="strip">
          <span class="grip"></span>
          <select class="pick floor" aria-label="楼层"><option>基础层</option></select>
          <select class="pick" aria-label="构件类别"><option>基础</option></select>
          <select class="pick" aria-label="构件类型"><option>集水坑</option></select>
          <select class="pick" aria-label="构件"><option>JSK-1</option></select><span class="split"></span>
          <button class="tb"><svg class="ico"><use href="#i-prop"/></svg>属性</button>
          <button class="tb"><svg class="ico"><use href="#i-edit"/></svg>编辑钢筋</button>
          <button class="tb"><svg class="ico"><use href="#i-list"/></svg>构件列表</button>
          <button class="tb"><svg class="ico"><use href="#i-dropper"/></svg>拾取构件</button>
        </div>
        <div class="strip axes">
          <span class="grip"></span>
          <button class="tb"><svg class="ico"><use href="#i-axis"/></svg>两点</button>
          <button class="tb"><svg class="ico"><use href="#i-parallel"/></svg>平行</button>
          <button class="tb"><svg class="ico"><use href="#i-angle"/></svg>点角</button><button class="arrow" aria-label="点角选项"></button>
          <button class="tb"><svg class="ico"><use href="#i-arc3"/></svg>三点辅轴</button><button class="arrow" aria-label="三点辅轴选项"></button>
          <button class="tb"><svg class="ico"><use href="#i-erase"/></svg>删除辅轴</button>
          <button class="tb"><svg class="ico"><use href="#i-dim"/></svg>尺寸标注</button><button class="arrow" aria-label="尺寸标注选项"></button>
        </div>
      </div>
      <div class="bar draw-bar d-flex">
        <div class="strip">
          <span class="grip me-1"></span>
          <button class="tb active"><svg class="ico"><use href="#i-cursor"/></svg>选择</button><button class="arrow" aria-label="选择选项"></button><span class="split"></span>
          <button class="tb"><svg class="ico"><use href="#i-point"/></svg>点</button>
          <button class="tb"><svg class="ico"><use href="#i-rotpt"/></svg>旋转点</button><span class="split"></span>
          <button class="tb" disabled><svg class="ico"><use href="#i-line"/></svg>直线</button>
          <button class="tb" disabled><svg class="ico"><use href="#i-arc"/></svg>三点画弧</button><button class="arrow narrow" disabled aria-label="画弧选项"></button>
          <select class="pick plain" aria-label="画弧参数"><option></option></select>
          <button class="tb" disabled><svg class="ico"><use href="#i-rect"/></svg>矩形</button><span class="split"></span>
          <button class="tb"><svg class="ico"><use href="#i-dir"/></svg>调整钢筋方向</button>
          <button class="tb"><svg class="ico"><use href="#i-slope"/></svg>调整集水坑放坡</button>
          <span class="grip me-3"></span>
        </div>
      </div>

      <div class="view flex-grow-1 overflow-hidden fill">
        <svg width="100%" height="100%" class="d-block" shape-rendering="crispEdges">
          <rect x="6" y="89" width="100%" height="254" fill="#b3b3b3"/>
          <rect x="8" y="179" width="100%" height="23" fill="#fff"/>
          <rect x="9" y="180" width="100%" height="21" fill="#f000f0"/>
          <rect x="865" y="223" width="100%" height="240" fill="#787800"/>
          <g fill="#c850a8">
            <rect x="865" y="334" width="100%" height="2"/><rect x="865" y="382" width="100%" height="2"/>
            <rect x="953" y="223" width="2" height="240"/><rect x="1043" y="223" width="2" height="240"/>
          </g>
          <g fill="#a80808">
            <rect y="59" width="100%" height="1" fill="#8c0000"/><rect y="193" width="100%" height="1"/><rect x="9" y="453" width="100%" height="1" fill="#8c0000"/>
            <rect x="143" width="1" height="89"/><rect x="634" width="1" height="89"/><rect x="745" width="1" height="89"/><rect x="819" width="1" height="89"/>
            <rect x="939" width="1" height="89"/><rect x="976" width="1" height="89"/><rect x="999" width="1" height="89"/><rect x="1058" width="1" height="89"/>
          </g>
          <g fill="#780000">
            <rect x="143" y="89" width="1" height="254"/><rect x="634" y="89" width="1" height="254"/><rect x="745" y="89" width="1" height="254"/><rect x="819" y="89" width="1" height="254"/>
            <rect x="939" y="89" width="1" height="254"/><rect x="976" y="89" width="1" height="254"/><rect x="999" y="89" width="1" height="254"/><rect x="1058" y="89" width="1" height="254"/>
          </g>
          <path d="M0 59.500h5M0 88.500h5M0 193.500h5M0 453.500h9" stroke="#0a6a0a"/>
          <g fill="none" stroke="#1c8a2c" shape-rendering="auto">
            <circle cx="13" cy="13" r="12"/><circle cx="252" cy="13" r="12"/><circle cx="498" cy="13" r="12"/><circle cx="745" cy="13" r="12"/>
            <circle cx="13" cy="89" r="12"/><circle cx="13" cy="343" r="12"/>
          </g>
          <g fill="#e8e8e8" font-size="14" text-anchor="middle">
            <text x="13" y="18">1</text><text x="252" y="18">2</text><text x="499" y="18">3</text><text x="745" y="18">4</text>
            <text x="13" y="94">A</text><text x="13" y="348">A1</text>
          </g>
          <g fill="#e01414">
            <rect x="6" y="88" width="100%" height="1"/><rect x="6" y="342" width="100%" height="1" fill="#c01010"/>
            <rect x="5" width="1" height="343"/><rect x="251" width="1" height="343"/><rect x="498" width="1" height="343"/>
          </g>
          <g fill="#a0a070" font-size="5">
            <text x="978" y="332">横向底筋 C12@200</text><text x="975" y="380">横向面筋 C12@200</text>
            <text transform="translate(956 320) rotate(90)">纵向底筋 C12@200</text><text transform="translate(1046 319) rotate(90)">纵向面筋 C12@200</text>
          </g>
          <g shape-rendering="auto">
            <path d="M53 459V421h-2l4-12 4 12h-2v38z" fill="#0f0"/>
            <path d="M57 457h36v-4l12 6-12 5v-3H57z" fill="#f00"/>
            <path d="M64 412l5 5 5-5M69 417v5" fill="none" stroke="#20c020"/>
            <path d="M93 438l9 9M102 438l-9 9" stroke="#c00000"/>
          </g>
        </svg>
      </div>

      <div class="status d-flex flex-shrink-0">
        <div class="strip">
          <span class="grip"></span>
          <button class="tb"><svg class="ico"><use href="#i-ortho"/></svg>正交</button>
          <button class="tb active"><svg class="ico"><use href="#i-snap"/></svg>对象捕捉</button>
          <button class="tb active"><svg class="ico"><use href="#i-dyn"/></svg>动态输入</button>
          <span class="grip ms-1"></span>
          <button class="tb"><svg class="ico"><use href="#i-cross"/></svg>交点</button>
          <button class="tb active"><svg class="ico"><use href="#i-perp"/></svg>垂点</button>
          <button class="tb active"><svg class="ico"><use href="#i-mid"/></svg>中点</button>
          <button class="tb"><svg class="ico"><use href="#i-vert"/></svg>顶点</button>
          <button class="tb"><svg class="ico"><use href="#i-coord"/></svg>坐标</button>
        </div>
      </div>
    </main>
  </div>

  <svg class="top-tab" width="390" height="6" aria-hidden="true"><path d="M20 0h182v4.500H20" fill="#fff" stroke="#b8bfd0"/><path d="M0 0h22q-6 5-19 5z" fill="#e8501c"/><ellipse cx="373" cy="0" rx="16" ry="2" fill="#aaa"/></svg>
  <section class="float-win" aria-label="Poi...">
    <div class="float-title d-flex align-items-center justify-content-between"><span>Poi...</span><span></span></div>
    <button>开始</button>
  </section>
</div>
<script src="https://cdn.jsdelivr.net/npm/bootstrap@5.3.0/dist/js/bootstrap.bundle.min.js"></script>
</body>
</html>
